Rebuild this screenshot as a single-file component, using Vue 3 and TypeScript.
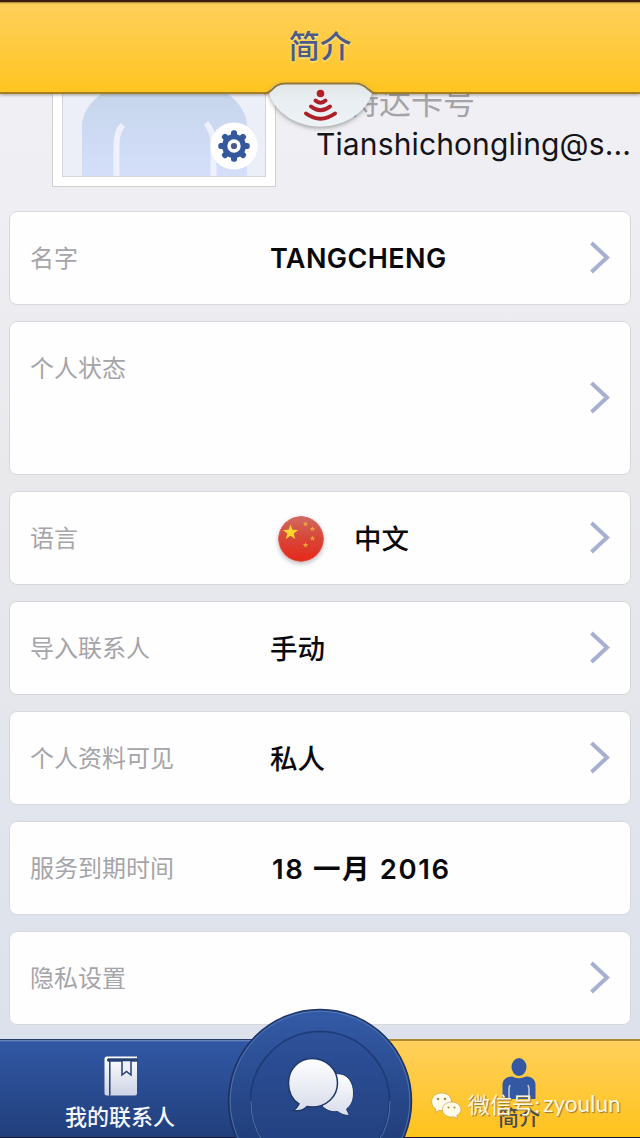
<script setup lang="ts">
interface Row {
  label: string
  value?: string
  tall?: boolean
  flag?: boolean
  arrow: boolean
  latin?: boolean
  date?: boolean
}

const rows: Row[] = [
  { label: '名字', value: 'TANGCHENG', arrow: true, latin: true },
  { label: '个人状态', tall: true, arrow: true },
  { label: '语言', value: '中文', flag: true, arrow: true },
  { label: '导入联系人', value: '手动', arrow: true },
  { label: '个人资料可见', value: '私人', arrow: true },
  { label: '服务到期时间', value: '18 一月 2016', arrow: false, date: true },
  { label: '隐私设置', arrow: true },
]

const star = (cx: number, cy: number, r: number): string =>
  Array.from({ length: 10 }, (_, i) => {
    const a = (i * Math.PI) / 5 - Math.PI / 2
    const d = i % 2 ? r * 0.42 : r
    return `${(cx + d * Math.cos(a)).toFixed(2)},${(cy + d * Math.sin(a)).toFixed(2)}`
  }).join(' ')

const stars: string[] = [
  star(12.5, 16.5, 8),
  star(27.5, 8, 2.9),
  star(34.5, 13, 2.9),
  star(34.5, 22.5, 2.9),
  star(27.5, 29, 2.9),
]
const teeth = [0, 45, 90, 135, 180, 225, 270, 315]
</script>

<template>
  <div class="screen">
    <header class="header">
      <h1>简介</h1>
      <svg class="tab" width="120" height="60" viewBox="0 0 120 60">
        <defs>
          <linearGradient id="tabFill" x1="0" y1="0" x2="0" y2="1">
            <stop offset="0" stop-color="#e0e4e4" />
            <stop offset=".35" stop-color="#e8eef1" />
            <stop offset="1" stop-color="#edf3f5" />
          </linearGradient>
          <filter id="tabShade" x="-20%" y="-20%" width="140%" height="160%">
            <feDropShadow dx="0" dy="2" stdDeviation="2.2" flood-color="#555" flood-opacity=".5" />
          </filter>
        </defs>
        <path d="M9 21 C11 14 17 11 24 11 H96 C103 11 109 14 112 21 C106 42 82 54.500 60 54.500 C39 54.500 15 42 9 21Z" fill="url(#tabFill)" filter="url(#tabShade)" />
        <path d="M4 21.500 C13 21.500 12 11.500 25 11.500 H95 C108 11.500 108 21.500 117 21.500" fill="none" stroke="#95793a" stroke-width="2" />
        <circle cx="60.500" cy="21.500" r="3.800" fill="#b61e29" />
        <g fill="none" stroke="#ad1f29" stroke-width="4" stroke-linecap="round">
          <path d="M55.500 28.500 Q60.500 33 65.500 28.500" />
          <path d="M51 34.500 Q60.500 42 70 34.500" />
          <path d="M46 41.500 Q60.500 52 75 41.500" />
        </g>
      </svg>
    </header>

    <section class="profile">
      <div class="photo">
        <div class="portrait">
          <svg width="203" height="84" viewBox="0 0 203 84">
            <defs>
              <linearGradient id="body" x1="0" y1="0" x2="0" y2="1">
                <stop offset="0" stop-color="#c6d5ec" />
                <stop offset="1" stop-color="#d5dffa" />
              </linearGradient>
            </defs>
            <path d="M19 84 V32 C19 20 27 8 38 0 H165 C176 8 184 20 184 32 V84Z" fill="url(#body)" />
            <path d="M53.500 84 V51 Q53.500 37 60 31" fill="none" stroke="#eef1fb" stroke-width="6" />
            <path d="M150.500 84 V51 Q150.500 37 143 29" fill="none" stroke="#eef1fb" stroke-width="6" />
          </svg>
        </div>
        <svg class="gear" width="48" height="48" viewBox="-24 -24 48 48">
          <circle r="23.600" fill="#fff" />
          <rect v-for="a in teeth" :key="a" x="-3" y="-15.700" width="6" height="9" rx="2.500" :transform="`rotate(${a})`" fill="#35589c" />
          <circle r="12" fill="#35589c" />
          <circle r="6.700" fill="#fff" />
          <circle r="3.100" fill="#4a578b" />
        </svg>
      </div>
      <div class="account">
        <span class="account-label">特达卡号</span>
        <span class="account-id">Tianshichongling@s...</span>
      </div>
    </section>

    <main class="list">
      <div v-for="row in rows" :key="row.label" class="card" :class="{ tall: row.tall }">
        <span class="label">{{ row.label }}</span>
        <div class="value" :class="{ latin: row.latin, date: row.date }">
          <svg v-if="row.flag" class="flag" width="46" height="46" viewBox="0 0 46 46">
            <defs>
              <linearGradient id="flagRed" x1="0" y1="0" x2="0" y2="1">
                <stop offset="0" stop-color="#cf6a62" />
                <stop offset=".5" stop-color="#d84536" />
                <stop offset="1" stop-color="#e5291b" />
              </linearGradient>
            </defs>
            <circle cx="23" cy="23" r="22.500" fill="url(#flagRed)" stroke="#d7665c" stroke-width="1" />
            <polygon v-for="(s, i) in stars" :key="s" :points="s" :fill="i === 0 ? '#ffd52e' : '#f2a03c'" />
          </svg>
          <span v-if="row.value">{{ row.value }}</span>
        </div>
        <svg v-if="row.arrow" class="arrow" width="24" height="36" viewBox="0 0 24 36">
          <path d="M3.500 3 L19 17.500 L3.500 32" fill="none" stroke="#a8b0cf" stroke-width="4" />
        </svg>
      </div>
    </main>

    <nav class="bar">
      <div class="item contacts">
        <svg width="34" height="40" viewBox="0 0 34 40">
          <defs>
            <linearGradient id="paper" x1="0" y1="0" x2="0" y2="1">
              <stop offset="0" stop-color="#fff" />
              <stop offset="1" stop-color="#cdd3e6" />
            </linearGradient>
          </defs>
          <path d="M3 .5 H33 V2.500 H4 Q2 4 4 5.500 H33 V37.500 Q33 39.500 31 39.500 H3 Q.5 39.500 .5 37 V3 Q.5 .5 3 .5Z" fill="url(#paper)" />
          <path d="M33.500 2.500 H4 Q2 4 4 5.500 H33.500Z" fill="#263f70" />
          <path d="M5.800 5 V39.500" stroke="#263f70" stroke-width="1.500" />
          <path d="M18 4.500 V19 L22.500 15.500 L27 19 V4.500Z" fill="#edf1fa" stroke="#263f70" stroke-width="1.500" />
        </svg>
        <span>我的联系人</span>
      </div>
      <div class="item self">
        <svg width="34" height="42" viewBox="0 0 34 42">
          <ellipse cx="17" cy="9" rx="7.500" ry="9" fill="#3459a2" />
          <path d="M.5 41 V27 C.5 21 5 18.500 10 18.500 Q17 22 24 18.500 C29 18.500 33.500 21 33.500 27 V41Z" fill="#3459a2" />
          <path d="M7 41 V30 L8 27 M27 41 V30 L26 27" fill="none" stroke="#c2cbdc" stroke-width="1.500" />
        </svg>
        <span>简介</span>
      </div>
      <svg class="chat" width="190" height="131" viewBox="0 0 190 131">
        <defs>
          <linearGradient id="disc" x1="0" y1="0" x2="0" y2="1">
            <stop offset="0" stop-color="#345ba8" />
            <stop offset=".7" stop-color="#213f7b" />
          </linearGradient>
          <linearGradient id="bubble" x1="0" y1="0" x2="0" y2="1">
            <stop offset="0" stop-color="#fff" />
            <stop offset="1" stop-color="#d7dcea" />
          </linearGradient>
        </defs>
        <circle cx="95" cy="94" r="91.500" fill="url(#disc)" stroke="#1c3263" stroke-width="1.500" />
        <circle cx="95" cy="94" r="89.800" fill="none" stroke="#6482bb" stroke-opacity=".65" />
        <circle cx="95" cy="94" r="69.500" fill="#27498d" fill-opacity=".35" stroke="#1d3a75" stroke-width="1.500" />
        <path d="M26 94 A70.500 70.500 0 0 0 38 135 M165 94 A70.500 70.500 0 0 1 153 135" fill="none" stroke="#526fa7" />
        <path d="M110 67 C121 65 128.500 74 128.500 86 C128.500 94 126 98.500 121.500 102 L124.500 108.500 C119 108.500 116 107 112.500 104.500 C106 105.500 101 103 97 99Z" fill="url(#bubble)" stroke="#1e3769" />
        <path d="M87 51.500 C101 51.500 112.500 62 112.500 76 C112.500 90 101 100 87 100 L82 99.500 C79 103 74 104.500 68.500 103.500 Q72 101 74 97 C67 92.500 63.500 85 63.500 76 C63.500 62 74 51.500 87 51.500Z" fill="url(#bubble)" stroke="#1e3769" stroke-width="1.500" />
      </svg>
      <div class="watermark">
        <svg width="31" height="28" viewBox="0 0 31 28">
          <g fill="#fffbe9" stroke="#b99645" stroke-width=".6">
            <path d="M10.500 1 C4.500 1 .7 5 .7 9.800 C.7 13 2.200 15.500 4.800 17 L4 20.500 L8 18.400 C14.500 19.500 20.500 15.500 20.500 9.800 C20.500 5 16.500 1 10.500 1Z" />
            <path d="M20.500 10 C15 10 11.500 13.500 11.500 17.600 C11.500 22.500 16.500 26 22.500 24.700 L26.500 26.500 L25.800 23.600 C28.500 22 30 20 30 17.600 C30 13.500 26 10 20.500 10Z" />
          </g>
          <g fill="#a88c4b">
            <circle cx="7" cy="7" r="1.300" /><circle cx="14" cy="7" r="1.300" />
            <circle cx="17.500" cy="15.500" r="1.100" /><circle cx="23.500" cy="15.500" r="1.100" />
          </g>
        </svg>
        <span class="wm-cn">微信号:</span>
        <span class="wm-id">zyoulun</span>
      </div>
    </nav>
  </div>
</template>

<style>
body {
  margin: 0;
}
</style>

<style scoped>
.screen {
  position: relative;
  width: 640px;
  height: 1138px;
  overflow: hidden;
  display: flex;
  flex-direction: column;
  background: linear-gradient(180deg, #f1eff4 0, #efeff3 200px, #e9e9ec 480px, #e4e6ed 750px, #dce1ec 1038px);
  font-family: Inter, "Noto Sans CJK SC", sans-serif;
}
.header {
  position: relative;
  z-index: 2;
  box-sizing: border-box;
  flex: none;
  height: 94px;
  border-top: 2px solid #3d1b0b;
  border-bottom: 2px solid #a38024;
  background: linear-gradient(180deg, #a8762e 0, #ffd05a 2px, #fecb42 40px, #ffc520 100%);
  box-shadow: 0 1px 3px rgba(70, 60, 40, 0.45);
}
h1 {
  margin: 0;
  text-align: center;
  font: 500 31.500px/85px "Noto Sans CJK SC", sans-serif;
  color: #4c5b87;
  text-shadow: 0 1px 2px #fff0a8;
}
.tab {
  position: absolute;
  left: 260px;
  top: 70px;
}
.profile {
  flex: none;
  display: flex;
  height: 117px;
}
.photo {
  position: relative;
  box-sizing: border-box;
  width: 224px;
  height: 93px;
  margin-left: 52px;
  padding: 0 9px 9px;
  background: #fff;
  border: 1px solid #cfcfd1;
  border-top: 0;
}
.portrait {
  height: 82px;
  overflow: hidden;
  border: 1px solid #d5d5da;
  border-top: 0;
  background: #eceff8;
}
.portrait svg {
  display: block;
}
.gear {
  position: absolute;
  left: 157px;
  top: 28px;
}
.account {
  display: flex;
  flex-direction: column;
  margin-left: 40px;
}
.account-label {
  margin: -9px 0 0 31px;
  font-size: 32px;
  line-height: 36px;
  color: #a3a3a8;
  font-weight: 400;
}
.account-id {
  margin-top: 4px;
  font-size: 30px;
  line-height: 38px;
  letter-spacing: 0.12px;
  color: #151519;
  white-space: nowrap;
}
.list {
  display: flex;
  flex-direction: column;
  gap: 16px;
  padding: 0 9px;
}
.card {
  box-sizing: border-box;
  flex: none;
  height: 94px;
  display: grid;
  grid-template-columns: 241px 1fr 24px;
  align-items: center;
  padding: 0 18px 0 20px;
  border: 1px solid #d5d9dc;
  border-radius: 8px;
  background: #fefeff;
}
.card.tall {
  height: 154px;
}
.label {
  padding-top: 2px;
  font-size: 24px;
  line-height: 36px;
  font-weight: 400;
  color: #a5a5a9;
}
.tall .label {
  align-self: start;
  padding-top: 0;
  margin-top: 29px;
}
.value {
  display: flex;
  align-items: center;
  padding-top: 1px;
  font-size: 27.500px;
  line-height: 36px;
  font-weight: 500;
  color: #09090b;
}
.value > span {
  margin-left: -1px;
}
.value.latin {
  padding-top: 2px;
  font-size: 27px;
  font-weight: 600;
  letter-spacing: 0.4px;
}
.value.date {
  padding: 2px 0 0 2px;
  font-size: 27.500px;
  font-weight: 600;
  letter-spacing: 1.600px;
}
.flag {
  margin: 0 31px 0 7px;
  border-radius: 50%;
  box-shadow: 0 2px 4px rgba(70, 70, 90, 0.35);
}
.arrow {
  grid-column: 3;
}
.bar {
  position: absolute;
  left: 0;
  right: 0;
  bottom: 0;
  height: 99px;
  display: grid;
  grid-template-columns: 320px 320px;
  box-sizing: border-box;
  border-bottom: 1px solid #171632;
}
.item {
  box-sizing: border-box;
  display: flex;
  flex-direction: column;
  align-items: center;
}
.contacts {
  padding: 16px 80px 0 0;
  border-top: 1px solid #263c6b;
  background: linear-gradient(180deg, #7a91c1 0, #3157a4 2px, #213f7c 100%);
  color: #f5f7ff;
  font-size: 22px;
  line-height: 34px;
  font-weight: 500;
}
.contacts svg {
  margin-left: 2px;
}
.contacts span {
  margin-top: 4px;
}
.self {
  padding: 17px 0 0 78px;
  border-top: 2px solid #ae8a32;
  background: linear-gradient(180deg, #ffd05b 0, #ffc31c 100%);
  color: #4b4a50;
  font-size: 21px;
  line-height: 30px;
  font-weight: 500;
}
.self span {
  margin-top: 3px;
}
.chat {
  position: absolute;
  left: 225px;
  bottom: -1px;
}
.watermark {
  position: absolute;
  left: 431px;
  top: 52px;
  display: flex;
  align-items: center;
  height: 30px;
  color: #fff6dc;
  text-shadow: 1px 1px 1px #8d7440;
  white-space: nowrap;
}
.wm-cn {
  margin: -6px 0 0 6px;
  font-size: 22px;
  font-weight: 400;
}
.wm-id {
  margin: -6px 0 0 3px;
  font-family: Lato, sans-serif;
  font-size: 22.500px;
}
</style>
